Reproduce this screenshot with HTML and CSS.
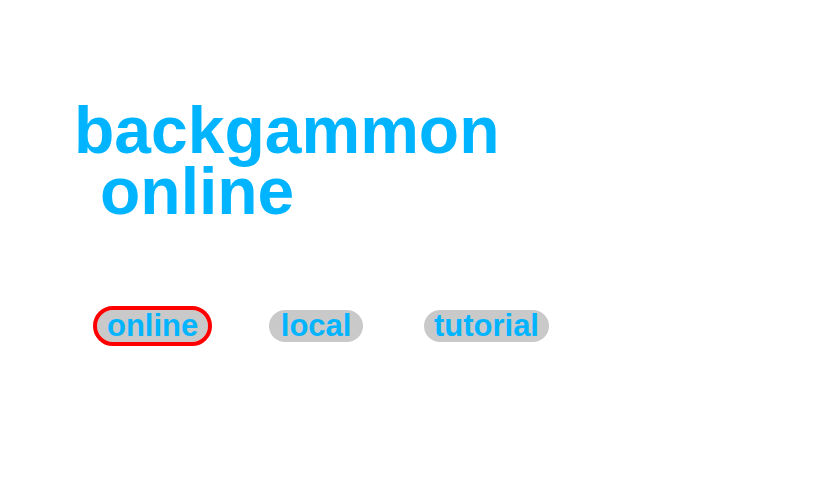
FILE: index.html
```html
<!DOCTYPE html>
<html>
<head>
<meta charset="utf-8">
<link rel="stylesheet" href="styles.css">
</head>
<body>
<main class="page">
  <h1 class="title"><span class="line">backgammon</span><span class="line indent">online</span></h1>
  <nav class="modes">
    <button class="mode selected">online</button>
    <button class="mode wide">local</button>
    <button class="mode">tutorial</button>
  </nav>
</main>
</body>
</html>
```
FILE: styles.css
```css
html, body {
  margin: 0;
  padding: 0;
  background: #ffffff;
}
.page {
  box-sizing: border-box;
  min-height: 100vh;
  display: flex;
  flex-direction: column;
  align-items: flex-start;
  padding: 100px 0 40px 74px;
  font-family: "Liberation Sans", Arial, sans-serif;
}
.title {
  margin: 0;
  font-size: 66px;
  line-height: 61px;
  font-weight: bold;
  color: #00b4ff;
  display: flex;
  flex-direction: column;
}
.line {
  display: block;
}
.line.indent {
  padding-left: 26px;
}
.modes {
  display: flex;
  gap: 61px;
  margin-top: 88px;
  margin-left: 23px;
  padding-bottom: 8px;
}
.mode {
  font-family: "Liberation Sans", Arial, sans-serif;
  font-weight: bold;
  font-size: 31px;
  line-height: 32px;
  height: 32px;
  padding: 0 10px;
  border: none;
  border-radius: 16px;
  background: #c9c9c9;
  color: #00b4ff;
}
.mode.wide {
  padding: 0 11.5px;
}
.mode.selected {
  outline: 4px solid #ff0000;
  outline-offset: 0;
}
```
